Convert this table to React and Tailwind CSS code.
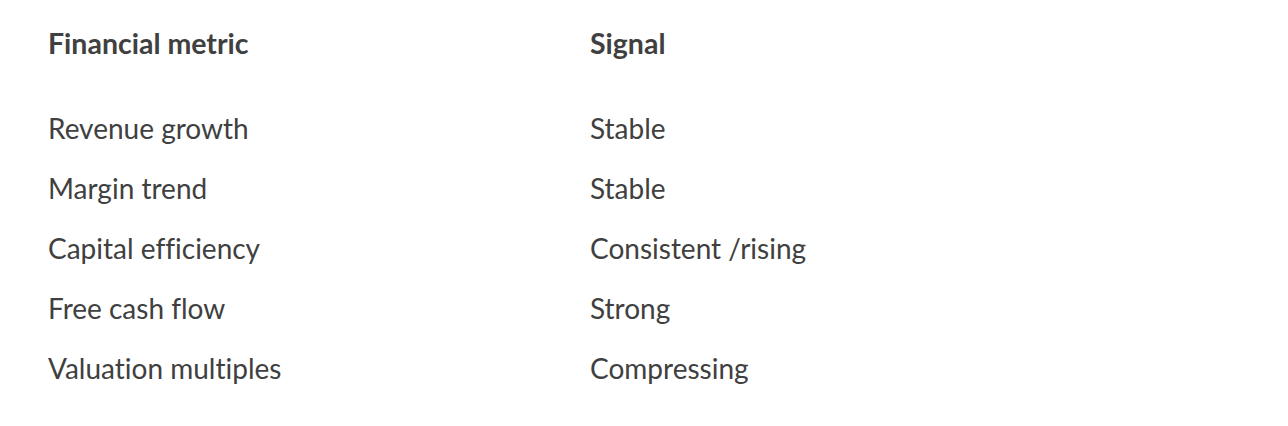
const rows = [
  ['Revenue growth', 'Stable'],
  ['Margin trend', 'Stable'],
  ['Capital efficiency', 'Consistent /rising'],
  ['Free cash flow', 'Strong'],
  ['Valuation multiples', 'Compressing'],
];

export default function App() {
  return (
    <div className="min-h-[426px] w-full bg-white pl-12 pt-[26px] text-[28px] text-[#404040] [font-variant-ligatures:no-common-ligatures]" style={{ fontFamily: 'Lato, "Open Sans", sans-serif' }}>
      <div className="grid grid-cols-[542px_1fr] text-[28.5px] font-bold">
        <div className="h-[34px] leading-[34px]">Financial metric</div>
        <div className="h-[34px] leading-[34px]">Signal</div>
      </div>
      <div className="mt-[51px]">
        {rows.map(([metric, signal]) => (
          <div key={metric} className="grid h-[60px] grid-cols-[542px_1fr] leading-[34px]">
            <div>{metric}</div>
            <div>{signal}</div>
          </div>
        ))}
      </div>
    </div>
  );
}
